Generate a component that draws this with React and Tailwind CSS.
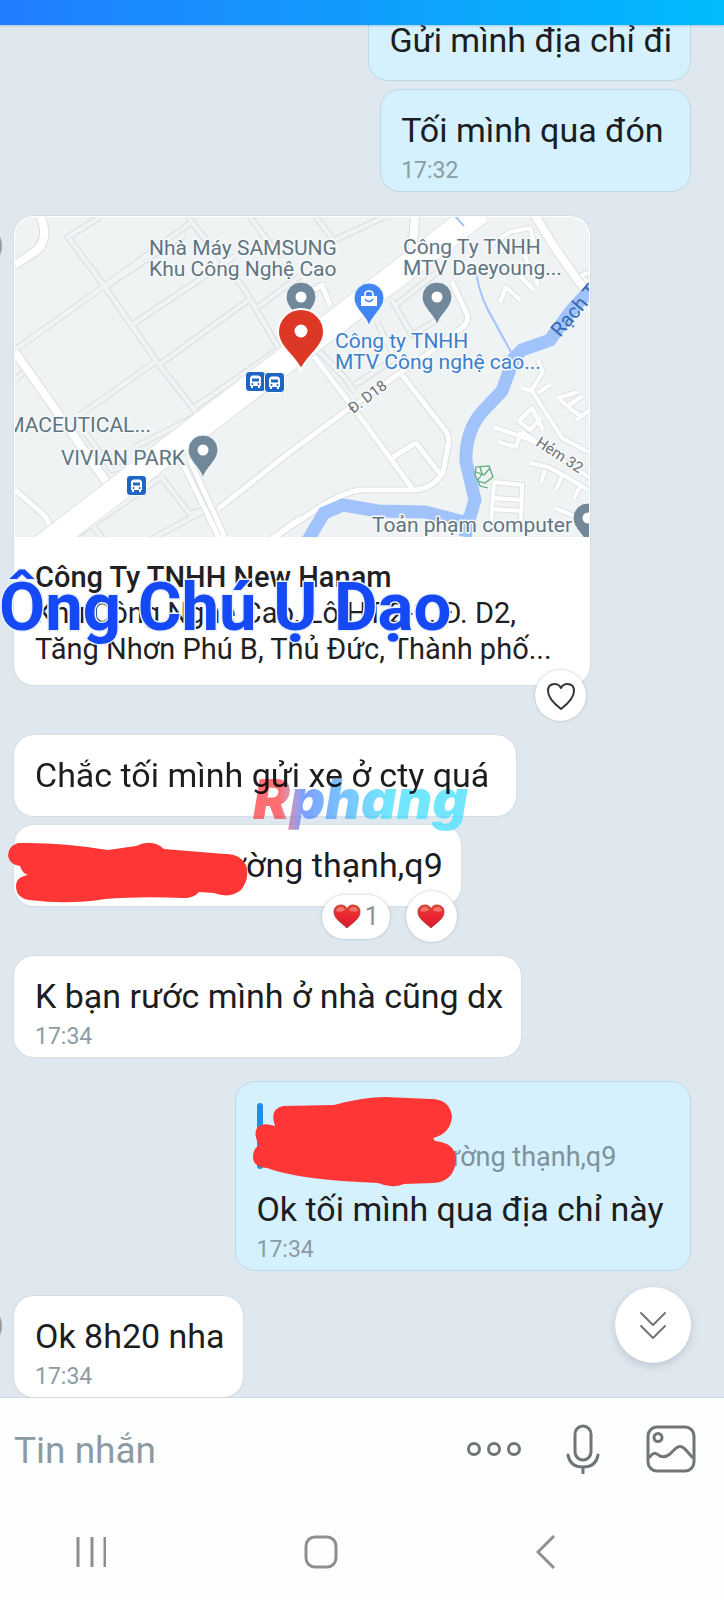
import React from "react";

const FAINT_ROADS = [
  "M100 217 L68 237 L105 287 L157 362 L203 421",
  "M15 350 L103 287 L192 222",
  "M105 287 L185 234",
  "M133 324 L235 256",
  "M160 364 L250 299",
  "M195 407 L300 335",
  "M80 415 L155 362",
  "M188 217 L245 290 L278 347",
  "M250 217 L276 252",
  "M258 307 L300 276",
  "M135 447 L198 415",
  "M85 432 L112 470 L126 466",
  "M15 380 L24 372",
  "M162 478 L190 514 L206 509",
  "M70 540 L160 478",
  "M92 525 L104 540",
  "M150 540 L205 510",
  "M316 217 L335 242",
  "M335 240 L384 217",
  "M355 385 L395 358 L377 322",
  "M355 392 L345 378 L318 350",
  "M392 300 L412 335 L440 318",
  "M396 305 L440 270",
];

const LOCAL_ROADS = [
  "M15 490 L44 515 Q52 524 50 540",
  "M182 462 L220 540",
  "M190 460 L226 540",
  "M218 509 L290 452 L347 410 L433 350 L464 326 Q470 320 466 312 L452 282",
  "M313 355 L355 410 L412 488",
  "M402 375 L445 430 Q450 436 448 446 L443 472 Q434 488 415 490 L360 490 Q345 492 320 507 L270 540",
  "M393 457 L416 443 L440 474",
  "M310 293 L322 285 L330 305",
  "M270 540 L300 518",
];

const ALLEYS = [
  "M522 388 L531 391 L543 372 L538 360",
  "M532 391 L562 438 L588 452",
  "M538 393 L551 384",
  "M519 421 L532 408 L543 430 M519 421 L530 430 L541 418",
  "M494 427 L520 436 L536 443",
  "M499 442 L516 447 L521 432",
  "M560 400 L572 410 L582 417 M557 398 L578 392 M568 406 L582 396",
  "M576 420 L590 410",
  "M522 432 L590 478",
  "M530 463 L548 467 L565 476 L588 490",
  "M545 470 L541 482 M562 476 L556 490 M580 487 L574 498",
  "M494 482 L522 485 L521 520 M494 482 L491 525 M493 498 L521 500 M492 509 L521 511",
  "M555 508 L578 518 M552 524 L562 528",
  "M500 302 L506 287 L520 300 M505 275 L512 268 L534 290 M520 245 L538 285",
  "M490 245 L510 232 L530 228 L536 250 M500 252 L516 240",
  "M590 272 L580 276 L590 284",
];

function Roads({ paths, width, casing, color, inner }) {
  return (
    <g fill="none" strokeLinejoin="round">
      {paths.map((d) => (
        <path key={d} d={d} stroke={casing} strokeWidth={width + inner} />
      ))}
      {paths.map((d) => (
        <path key={d} d={d} stroke={color} strokeWidth={width} />
      ))}
    </g>
  );
}

function Pin({ x, y, color = "#70889a", children }) {
  return (
    <g transform={`translate(${x} ${y})`}>
      <path
        d="M0 29 C-1 19 -15 11 -15 0 A15 15 0 1 1 15 0 C15 11 1 19 0 29Z"
        fill={color}
        stroke="#f7fafb"
        strokeWidth="1"
      />
      {children || <circle r="5.5" fill="#fff" />}
    </g>
  );
}

function BusStop({ x, y }) {
  return (
    <g transform={`translate(${x} ${y})`}>
      <rect x="-.5" y="-.5" width="20" height="20" rx="3.5" fill="#1f66c4" stroke="#fff" strokeWidth="1" />
      <path d="M4 7 Q4 3.500 7 3.500 H12 Q15 3.500 15 7 V14 H14 V16 H12 V14 H7 V16 H5 V14 H4Z" fill="#fff" />
      <path d="M6 6.500 H13 V9.500 H6Z" fill="#1f66c4" />
      <circle cx="6.500" cy="12" r="1" fill="#1f66c4" />
      <circle cx="12.500" cy="12" r="1" fill="#1f66c4" />
    </g>
  );
}

function MapView() {
  return (
    <svg viewBox="15 217 574 320" className="block w-full" role="img" aria-label="Bản đồ">
      <rect x="15" y="217" width="574" height="320" fill="#eff3f4" />
      <Roads paths={FAINT_ROADS} width={4} inner={3} casing="#e0e3e5" color="#f1f4f5" />
      <Roads paths={ALLEYS} width={4} inner={2} casing="#dfe2e4" color="#fff" />
      <Roads paths={LOCAL_ROADS} width={5} inner={2} casing="#dcdfe1" color="#fff" />
      <Roads
        paths={["M15 265 L33 253 Q50 243 41 217", "M15 352 L112 490", "M415 217 L412 255", "M533 212 L555 248 L592 300"]}
        width={8}
        inner={2}
        casing="#dcdfe1"
        color="#fff"
      />
      <path d="M40 549 L480 211" stroke="#e1e4e6" strokeWidth="27" />
      <path d="M40 549 L480 211" stroke="#fff" strokeWidth="25" />
      <g fill="none" stroke="#a1c3fb">
        <path d="M308 540 L324 513 L343 505 L378 511 L425 512 L468 523 L475 500 L466 462 Q465 432 482 412 L502 391 L514 358 L522 350 L550 340 L570 312 L592 288" strokeWidth="13" />
        <path d="M465 537 L470 515" strokeWidth="13" />
        <path d="M455 216 L464 226 M476 270 Q478 290 488 310 L511 352" strokeWidth="2" />
      </g>
      <g fill="none" stroke="#55aa77" strokeWidth="1.200">
        <path d="M476 467 L489 466 L493 477 L485 483 L478 481 L475 475Z M476 472 L484 475 L490 468 M480 467 L482 474 L478 480 M478 481 L480 486 L488 488" />
      </g>

      <Pin x={301} y={297} />
      <Pin x={437} y={297} />
      <Pin x={203} y={450} />
      <Pin x={588} y={518} />
      <Pin x={369} y={298} color="#4285f4">
        <path d="M-8 -2 H8 V8 H-8Z" fill="#fff" />
        <path d="M-4 -2 V-4 Q-4 -7 0 -7 Q4 -7 4 -4 V-2" fill="none" stroke="#fff" strokeWidth="1.600" />
        <path d="M-4 1 Q0 6 4 1" fill="none" stroke="#4285f4" strokeWidth="1.600" />
      </Pin>
      <path
        d="M301 370 C296 357 278 347 278 332 A23 23 0 1 1 324 332 C324 347 306 357 301 370Z"
        fill="#dd3826"
        stroke="#fff"
        strokeWidth="2"
      />
      <circle cx="301" cy="331" r="6.500" fill="#fff" />
      <BusStop x={246} y={372} />
      <BusStop x={265} y={373} />
      <BusStop x={127} y={476} />

      <g fontFamily="Roboto, sans-serif" fontSize="21" fill="#607580" stroke="#f7f9fa" strokeWidth="3" strokeLinejoin="round" paintOrder="stroke">
        <text x="149" y="255">Nhà Máy SAMSUNG</text>
        <text x="149" y="276">Khu Công Nghệ Cao</text>
        <text x="403" y="254">Công Ty TNHH</text>
        <text x="403" y="275">MTV Daeyoung...</text>
        <text x="151" y="432" textAnchor="end">MACEUTICAL...</text>
        <text x="61" y="465">VIVIAN PARK</text>
        <text x="372" y="532">Toản phạm computer</text>
        <g fill="#3b80cc">
          <text x="335" y="348">Công ty TNHH</text>
          <text x="335" y="369">MTV Công nghệ cao...</text>
        </g>
        <g fontSize="15" fill="#6a6f72">
          <text transform="translate(353 414) rotate(-37)">Đ. D18</text>
          <text transform="translate(535 445) rotate(33)">Hẻm 32</text>
        </g>
        <text transform="translate(560 338) rotate(-50)" fontSize="20" fill="#3467ad" stroke="none">Rạch T</text>
      </g>
    </svg>
  );
}

function Time({ children }) {
  return <time className="mt-[7px] block text-[23px] leading-[28px] text-[#8d9ba3]">{children}</time>;
}

function Sent({ children, hasTime }) {
  return (
    <div className={`relative self-end rounded-[20px] border border-[#bcd9e6] bg-[#d4f1fd] pt-5 pr-[18px] pl-5 ${hasTime ? "pb-[6px]" : "pb-5"}`}>
      {children}
    </div>
  );
}

function Received({ children, hasTime, className = "pl-[21px]" }) {
  return (
    <div className={`relative self-start rounded-[20px] bg-white pt-5 pr-[18px] shadow-[0_0_2px_rgba(120,140,160,0.35)] ${hasTime ? "pb-[6px]" : "pb-[21px]"} ${className}`}>
      {children}
    </div>
  );
}

function Text({ children }) {
  return <p className="text-[34px] leading-[40px] whitespace-nowrap text-[#1b1d1f]">{children}</p>;
}

function AvatarEdge({ className }) {
  return <span aria-hidden="true" className={`absolute -left-14 size-11 rounded-full bg-[#9b9c9e] ${className}`} />;
}

function RedHeart() {
  return (
    <svg viewBox="0 0 28 25" className="h-[25px] w-7" aria-hidden="true">
      <defs>
        <linearGradient id="heartFill" x1="0" y1="0" x2="0" y2="1">
          <stop offset="0" stopColor="#e8452f" />
          <stop offset=".45" stopColor="#ea2630" />
          <stop offset="1" stopColor="#d81c2e" />
        </linearGradient>
      </defs>
      <path d="M14 24 C9 19 1 15 1 8 A6.800 6.800 0 0 1 14 5 A6.800 6.800 0 0 1 27 8 C27 15 19 19 14 24Z" fill="url(#heartFill)" stroke="#a93232" strokeWidth=".8" />
      <path d="M3 7 Q4 3 8 3 Q11 3 12 6 Q8 9 3 7Z M16 6 Q17 3 21 3 Q24 3 25 7 Q20 9 16 6Z" fill="#fff" opacity=".3" />
    </svg>
  );
}

export default function App() {
  return (
    <div className="flex min-h-screen flex-col bg-[#e0e8ef] font-[Roboto,'Noto_Sans',sans-serif]">
      <header className="relative z-10 h-[25px] bg-linear-to-r from-[#217dff] to-[#00bbfb] shadow-[0_1px_2px_rgba(90,140,200,0.4)]" />

      <main className="relative flex flex-1 flex-col overflow-hidden pr-[33px] pl-[14px]">
        <div className="-mt-[26px] flex flex-col gap-2">
          <Sent>
            <Text>Gửi mình địa chỉ đi</Text>
          </Sent>
          <Sent hasTime>
            <Text>Tối mình qua đón&nbsp;</Text>
            <Time>17:32</Time>
          </Sent>
        </div>

        <article className="relative mt-6 w-[576px] max-w-full self-start rounded-[20px] bg-white shadow-[0_0_2px_rgba(120,140,160,0.35)]">
          <AvatarEdge className="top-2" />
          <div className="overflow-hidden rounded-t-[20px] border border-b-0 border-white">
            <MapView />
          </div>
          <div className="px-[21px] pt-[22px] pb-[18px] text-[29px] leading-[36px] text-[#1f2123]">
            <h2 className="font-medium">Công Ty TNHH New Hanam</h2>
            <p className="whitespace-nowrap">Khu Công Nghệ Cao, Lô HT-2-1, Đ. D2,</p>
            <p className="whitespace-nowrap">Tăng Nhơn Phú B, Thủ Đức, Thành phố...</p>
          </div>
          <strong className="pointer-events-none absolute -left-[15px] bottom-[38px] text-[67px] leading-[80px] font-bold whitespace-nowrap text-[#1549f5] [-webkit-text-stroke:3px_#eaf2ff] [paint-order:stroke_fill]">
            Ông Chú Ụ Dạo
          </strong>
          <button aria-label="Thích" className="absolute right-1 -bottom-9 grid size-[51px] place-items-center rounded-full bg-white shadow-[0_0_3px_rgba(100,120,140,0.45)]">
            <svg viewBox="0 0 30 28" className="h-7 w-[30px]" fill="none" stroke="#33383b" strokeWidth="2" strokeLinejoin="round">
              <path d="M15 27 Q2 17 2 9 Q2 2 8.500 2 Q13 2 15 6 Q17 2 21.500 2 Q28 2 28 9 Q28 17 15 27Z" />
            </svg>
          </button>
        </article>

        <div className="mt-[50px] flex flex-col gap-[9px]">
          <Received className="z-10 pl-[21px]">
            <Text>Chắc tối mình gửi xe ở cty quá&nbsp;</Text>
            <span className="pointer-events-none absolute -bottom-[19px] left-[239px] bg-linear-to-r from-[#ff4a50] from-12% via-[#5c88ff] via-22% to-[#4fe0ff] to-60% bg-clip-text pr-2 font-[Inter,sans-serif] text-[55px] leading-[72px] font-black text-transparent italic opacity-80 mix-blend-multiply">
              Rphang
            </span>
          </Received>
          <Received className="pl-[211px]">
            <Text>ường thạnh,q9</Text>
            <svg viewBox="8 843 240 62" className="absolute -left-[6px] top-[17px] h-[62px] w-[240px]" aria-hidden="true">
              <path d="M18 844 Q8 847 8 857 Q10 866 20 867 Q22 874 28 876 Q15 878 16 889 Q17 899 29 901 Q70 906 105 900 Q140 897 184 899 Q194 899 199 893 L214 894 Q230 900 241 891 Q250 880 246 866 Q239 854 225 855 L164 850 Q152 839 136 847 L108 851 Q60 843 18 844Z" fill="#ff3636" />
            </svg>
            <div className="absolute right-1 -bottom-9 flex items-center gap-4 whitespace-nowrap">
              <button className="flex h-11 items-center gap-1 rounded-full bg-white px-[11px] text-[25px] text-[#8c9194] shadow-[0_0_3px_rgba(100,120,140,0.45)]">
                <RedHeart />1
              </button>
              <button aria-label="Thả tim" className="grid size-[51px] place-items-center rounded-full bg-white shadow-[0_0_3px_rgba(100,120,140,0.45)]">
                <RedHeart />
              </button>
            </div>
          </Received>
        </div>

        <div className="mt-[50px] flex flex-col gap-6">
          <Received hasTime>
            <Text>K bạn rước mình ở nhà cũng dx</Text>
            <Time>17:34</Time>
          </Received>
          <Sent hasTime>
            <blockquote className="mt-px h-[72px] pt-9">
              <span className="absolute top-[21px] left-[21px] h-[66px] w-[6px] rounded-full bg-[#1e8fe6]" />
              <p className="pl-[187px] text-[27px] leading-[36px] whitespace-nowrap text-[#7f919c]">ường thạnh,q9</p>
              <svg viewBox="254 1097 205 90" className="absolute left-[17px] top-[15px] h-[90px] w-[205px]" aria-hidden="true">
                <path d="M284 1106 L335 1105 Q365 1097 386 1097 L432 1099 Q451 1099 453 1117 Q451 1134 434 1138 L436 1141 Q457 1143 457 1160 Q455 1182 434 1183 L405 1184 Q393 1189 379 1183 Q300 1180 268 1168 Q254 1167 254 1157 Q254 1149 260 1145 Q252 1130 262 1125 Q267 1123 276 1126 Q270 1109 284 1106Z" fill="#ff3636" />
              </svg>
            </blockquote>
            <div className="mt-[14px]">
              <Text>Ok tối mình qua địa chỉ này&nbsp;</Text>
            </div>
            <Time>17:34</Time>
          </Sent>
        </div>

        <div className="relative mt-[25px] flex flex-col">
          <AvatarEdge className="top-2" />
          <Received hasTime>
            <Text>Ok 8h20 nha</Text>
            <Time>17:34</Time>
          </Received>
          <button aria-label="Cuộn xuống" className="absolute right-0 bottom-[34px] grid size-[76px] place-items-center rounded-full bg-white shadow-[0_3px_8px_rgba(100,120,140,0.3)]">
            <svg viewBox="0 0 30 30" className="size-[30px]" fill="none" stroke="#727578" strokeWidth="2" strokeLinecap="round" strokeLinejoin="round">
              <path d="M3 3 L15 15 L27 3 M3 16 L15 28 L27 16" />
            </svg>
          </button>
        </div>
      </main>

      <footer className="border-t border-[#d3dade] bg-[#fdfefe]">
        <form className="flex h-[102px] items-center pr-7 pl-[14px]" onSubmit={(e) => e.preventDefault()}>
          <input aria-label="Tin nhắn" placeholder="Tin nhắn" className="min-w-0 flex-1 bg-transparent pt-1 text-[37px] leading-[44px] outline-none placeholder:text-[#8d9aa2]" />
          <button type="button" aria-label="Thêm">
            <svg viewBox="0 0 56 16" className="h-4 w-14" fill="none" stroke="#727577" strokeWidth="3">
              <circle cx="8" cy="8" r="5.500" />
              <circle cx="28" cy="8" r="5.500" />
              <circle cx="48" cy="8" r="5.500" />
            </svg>
          </button>
          <button type="button" aria-label="Ghi âm" className="ml-11">
            <svg viewBox="0 0 34 50" className="h-[50px] w-[34px]" fill="none" stroke="#727577" strokeWidth="3" strokeLinecap="round">
              <rect x="9" y="2" width="16" height="34" rx="8" />
              <path d="M2 31 Q4 43 17 43 Q30 43 32 31 M17 43 V49" />
            </svg>
          </button>
          <button type="button" aria-label="Gửi ảnh" className="ml-[46px]">
            <svg viewBox="0 0 50 48" className="h-12 w-[50px]" fill="none" stroke="#727577" strokeWidth="3">
              <rect x="2" y="2" width="46" height="44" rx="9" />
              <circle cx="12" cy="12.500" r="4" />
              <path d="M3 33 C8 26 10 28 14 31 Q19 33 24 29 L29 24 Q34 19 39 24 L47 33" />
            </svg>
          </button>
        </form>
        <nav className="flex h-[100px] items-center justify-between pt-1 pr-[168px] pl-[76px] text-[#8d8f91]">
          <button aria-label="Gần đây">
            <svg viewBox="0 0 30 34" className="h-[34px] w-[30px]" stroke="currentColor" strokeWidth="3">
              <path d="M2 2 V32 M16 2 V32 M29 2 V32" />
            </svg>
          </button>
          <button aria-label="Trang chủ">
            <svg viewBox="0 0 34 34" className="size-[34px]" fill="none" stroke="currentColor" strokeWidth="3">
              <rect x="2" y="2" width="30" height="30" rx="9" />
            </svg>
          </button>
          <button aria-label="Quay lại">
            <svg viewBox="0 0 20 34" className="h-[34px] w-5" fill="none" stroke="currentColor" strokeWidth="3">
              <path d="M18 1 L2 17 L18 33" />
            </svg>
          </button>
        </nav>
      </footer>
    </div>
  );
}
